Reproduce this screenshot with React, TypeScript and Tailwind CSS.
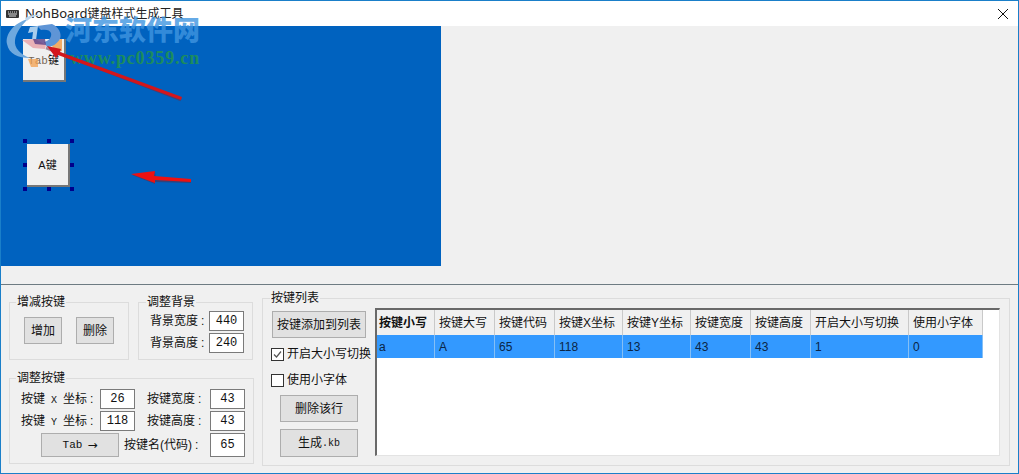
import React from "react";

const cn = "font-['Liberation_Sans','Noto_Sans_CJK_SC',sans-serif]";
const mono = "font-['Liberation_Mono',monospace]";

function Btn({ children, className }: { children: React.ReactNode; className: string }) {
  return (
    <button className={`flex items-center justify-center border border-[#adadad] bg-[#e1e1e1] text-[12px] text-[#111] ${className}`}>
      {children}
    </button>
  );
}

function Num({ value, className = "h-[20px]" }: { value: string; className?: string }) {
  return (
    <div className={`flex w-[35px] items-center justify-center border border-[#7a7a7a] bg-white ${mono} text-[12px] text-[#111] ${className}`}>
      {value}
    </div>
  );
}

function Group({ title, className, legend = "ml-[6px]", children }: { title: string; className: string; legend?: string; children: React.ReactNode }) {
  return (
    <fieldset className={`min-w-0 border border-[#dcdcdc] ${className}`}>
      <legend className={`px-[1px] text-[12px] leading-[16px] text-[#111] ${legend}`}>{title}</legend>
      {children}
    </fieldset>
  );
}

function Check({ label, checked }: { label: string; checked?: boolean }) {
  return (
    <div className="-ml-[1px] flex items-center gap-[3px] text-[12px] text-[#111]">
      <div className="flex h-[13px] w-[13px] items-center justify-center border border-[#333] bg-white">
        {checked && (
          <svg viewBox="0 0 11 11" className="h-[11px] w-[11px]">
            <path d="M2 5.5 L4.5 8 L9 2.5" fill="none" stroke="#555" strokeWidth="1.2" />
          </svg>
        )}
      </div>
      <span className="whitespace-nowrap">{label}</span>
    </div>
  );
}

function Label({ text, className }: { text: React.ReactNode; className: string }) {
  return (
    <span className={`whitespace-pre ${className}`}>
      {text}
      <span className="ml-[3px]">:</span>
    </span>
  );
}

const columns = [
  { title: "按键小写", cell: "a", w: "w-[58px] pl-[2px]", bold: true },
  { title: "按键大写", cell: "A", w: "w-[60px] pl-[4px]" },
  { title: "按键代码", cell: "65", w: "w-[60px] pl-[4px]" },
  { title: "按键X坐标", cell: "118", w: "w-[68px] pl-[4px]" },
  { title: "按键Y坐标", cell: "13", w: "w-[68px] pl-[4px]" },
  { title: "按键宽度", cell: "43", w: "w-[60px] pl-[4px]" },
  { title: "按键高度", cell: "43", w: "w-[60px] pl-[4px]" },
  { title: "开启大小写切换", cell: "1", w: "w-[98px] pl-[4px]" },
  { title: "使用小字体", cell: "0", w: "w-[74px] pl-[4px]" },
];

function Handle() {
  return <div className="h-[4px] w-[4px] bg-[#00008b]" />;
}

function Overlay() {
  return (
    <>
      {/* watermark */}
      <svg className="absolute left-[-1px] top-[-1px] h-[110px] w-[210px]" viewBox="0 0 210 110">
        <path d="M28 59 L38 59 L38 67 L31 67 Z" fill="#f4a04e" opacity="0.75" />
        <path d="M47 41 L62 39 L62 51 L56 52 L52 46 Z" fill="#f4a04e" opacity="0.85" />
        <path d="M28 19 C14 23 5 34 7 44 C9 54 18 58 30 58 C20 54 14 48 15 40 C16 32 22 25 28 19 Z" fill="#6fa9de" />
        <path d="M25 18 C30 15 36 14 42 15 C34 16 30 18 27 21 Z" fill="#bcd7ee" />
        <path d="M37 26 L52 24 C59 27 62 34 60 39 C57 44 52 47 47 47 L44 42 C49 41 52 37 51 33 C50 30 46 29 41 30 Z" fill="#5f95d6" />
        <path d="M30 27 L38 26 L36 40 L32 40 L33 32 L28 33 Z" fill="#a9cdec" />
        <path d="M22 40 L35 39 L46 45 L45 49 L33 48 Z" fill="#e8a6ac" opacity="0.85" />
        <path d="M33 39 L45 39 L46 45 L35 44 Z" fill="#5b3f86" opacity="0.8" />
      </svg>
      <div className="absolute left-[64px] top-[14px] text-[27px] font-black leading-[32px] text-[#3f95e0] opacity-80 [font-family:'Liberation_Serif','Noto_Sans_CJK_SC',serif]">
        河东软件网
      </div>
      <div className="absolute left-[69px] top-[47px] text-[18px] font-bold leading-[20px] tracking-[0.85px] text-[#1c8c5e] [font-family:'Liberation_Serif',serif]">
        www.pc0359.cn
      </div>
      {/* red arrows */}
      <svg className="absolute left-[-1px] top-[-1px] h-[200px] w-[200px]" viewBox="0 0 200 200">
        <path d="M46 48 L181 100" stroke="#6d2a44" strokeWidth="2.5" opacity="0.55" fill="none" />
        <path d="M47 46 L61 49 L60 52 L182 97 L181 100 L58 55 L56 58 Z" fill="#d3161b" />
        <path d="M132 175 L155 172 L156 178 L191 181 L191 183 L155 182 L155 184 Z" fill="#5b2a44" opacity="0.55" />
        <path d="M131 174 L155 171 L154 176 L191 179 L191 182 L155 180 L155 183 Z" fill="#ee1111" />
      </svg>
    </>
  );
}

export default function App() {
  return (
    <div className={`relative flex h-[474px] w-[1019px] flex-col overflow-hidden border border-[#1a7fc9] bg-[#f0f0f0] ${cn}`}>
      <div className="flex h-[25px] shrink-0 items-center bg-white pl-[5px] pr-[10px]">
        <svg viewBox="0 0 13 9" className="h-[9px] w-[13px]">
          <rect x="0" y="1" width="13" height="8" rx="1" fill="#333" />
          <path d="M2 3h1M4 3h1M6 3h1M8 3h1M10 3h1M2 5h9M3 7h7" stroke="#ddd" strokeWidth="1" />
        </svg>
        <span className="ml-[6px] flex-1 text-[12px] text-[#222]">
          <span className="text-[13px] [font-family:'Noto_Sans',sans-serif]">NohBoard</span>键盘样式生成工具
        </span>
        <svg viewBox="0 0 10 10" className="h-[10px] w-[10px]">
          <path d="M0 0 L10 10 M10 0 L0 10" stroke="#111" strokeWidth="1" />
        </svg>
      </div>

      <div className="h-[240px] w-[440px] shrink-0 bg-[#0062bf]" />

      <div className="h-[19px] shrink-0 border-b border-[#6d7b82]" />

      <div className="flex min-h-0 flex-1 pl-[8px]">
        <div className="flex w-[246px] shrink-0 flex-col gap-[10px] pt-[9px]">
          <div className="flex gap-[9px]">
            <Group title="增减按键" className="h-[66px] w-[120px]">
              <div className="flex gap-[14px] pl-[14px] pt-[7px]">
                <Btn className="h-[27px] w-[38px]">增加</Btn>
                <Btn className="h-[27px] w-[38px]">删除</Btn>
              </div>
            </Group>
            <Group title="调整背景" className="h-[66px] w-[115px]" legend="ml-[7px]">
              <div className="flex flex-col gap-[2px] pl-[11px] pt-[1px] text-[12px] text-[#111]">
                <div className="flex items-center">
                  <Label text="背景宽度" className="w-[59px]" />
                  <Num value="440" />
                </div>
                <div className="flex items-center">
                  <Label text="背景高度" className="w-[59px]" />
                  <Num value="240" />
                </div>
              </div>
            </Group>
          </div>

          <Group title="调整按键" className="h-[94px] w-[245px]">
            <div className="flex flex-col gap-[2px] pl-[11px] pt-[3px] text-[12px] text-[#111]">
              <div className="flex h-[20px] items-center">
                <Label
                  className="w-[79px]"
                  text={<>按键<span className={`${mono} text-[10px]`}> X </span>坐标</>}
                />
                <Num value="26" />
                <Label text="按键宽度" className="ml-[12px] w-[63px]" />
                <Num value="43" />
              </div>
              <div className="flex h-[20px] items-center">
                <Label
                  className="w-[79px]"
                  text={<>按键<span className={`${mono} text-[10px]`}> Y </span>坐标</>}
                />
                <Num value="118" />
                <Label text="按键高度" className="ml-[12px] w-[63px]" />
                <Num value="43" />
              </div>
              <div className="flex h-[24px] items-center pl-[20px]">
                <Btn className={`h-[24px] w-[78px] gap-[5px] ${mono}`}>
                  <span className="text-[11px]">Tab</span>
                  <span className="[font-family:'DejaVu_Sans',sans-serif]">→</span>
                </Btn>
                <Label text="按键名(代码)" className="ml-[5px] w-[86px]" />
                <Num value="65" className="h-[24px]" />
              </div>
            </div>
          </Group>
        </div>

        <div className="pl-[7px] pt-[5px]">
          <Group title="按键列表" className="flex h-[176px] w-[748px]" legend="ml-[7px]">
            <div className="flex">
              <div className="flex w-[103px] shrink-0 flex-col pl-[9px] pt-[5px]">
                <Btn className="h-[27px] w-[94px]">按键添加到列表</Btn>
                <div className="mt-[7px]"><Check label="开启大小写切换" checked /></div>
                <div className="mt-[8px]"><Check label="使用小字体" /></div>
                <Btn className="ml-[8px] mt-[6px] h-[27px] w-[78px]">删除该行</Btn>
                <Btn className="ml-[8px] mt-[7px] h-[28px] w-[78px]">
                  生成<span className={`${mono} text-[10px]`}>.kb</span>
                </Btn>
              </div>
              <div className="ml-[9px] mt-[2px] h-[148px] w-[625px] border-b border-l-2 border-r border-t-2 border-b-[#e3e3e3] border-l-[#696969] border-r-[#e3e3e3] border-t-[#696969] bg-white">
                <div className="flex h-[25px]">
                  {columns.map((c) => (
                    <div
                      key={c.title}
                      className={`flex shrink-0 items-center whitespace-nowrap border-r border-[#c9c9c9] bg-[#f0f0f0] text-[12px] text-[#111] ${c.w} ${c.bold ? "font-bold" : ""}`}
                    >
                      {c.title}
                    </div>
                  ))}
                </div>
                <div className="flex h-[23px]">
                  {columns.map((c) => (
                    <div
                      key={c.title}
                      className={`flex shrink-0 items-center border-r border-[#85bff5] bg-[#3399ff] text-[12px] text-[#0b2545] ${c.w}`}
                    >
                      {c.cell}
                    </div>
                  ))}
                </div>
              </div>
            </div>
          </Group>
        </div>
      </div>

      {/* keys on the canvas */}
      <div className="absolute left-[22px] top-[38px] flex h-[43px] w-[43px] items-center justify-center border-b-2 border-r-2 border-b-[#777] border-r-[#777] bg-[#f0f0f0] pt-[2px] text-[11px] text-[#111]">
        <span><span className={`${mono} text-[#765]`}>Tab</span>键</span>
      </div>
      <div className="absolute left-[26px] top-[143px] flex h-[43px] w-[43px] items-center justify-center border-b-2 border-r-2 border-b-[#777] border-r-[#777] bg-[#f0f0f0] pt-[2px] text-[11px] text-[#111]">
        A键
      </div>
      <div className="absolute left-[22px] top-[138px] flex h-[52px] w-[51px] flex-col justify-between">
        <div className="flex justify-between"><Handle /><Handle /><Handle /></div>
        <div className="flex justify-between"><Handle /><Handle /></div>
        <div className="flex justify-between"><Handle /><Handle /><Handle /></div>
      </div>
      <Overlay />
    </div>
  );
}
